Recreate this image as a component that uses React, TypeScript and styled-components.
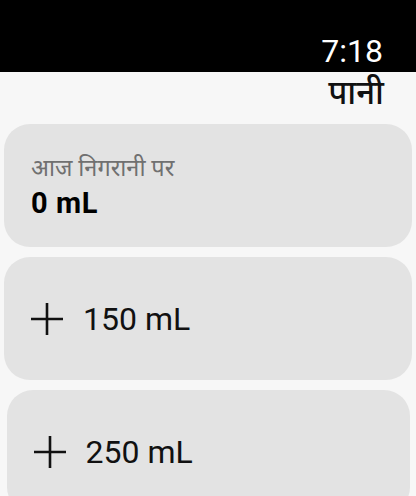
import React from 'react';
import styled, { createGlobalStyle } from 'styled-components';

const GlobalStyle = createGlobalStyle`
  html, body {
    margin: 0;
    padding: 0;
    background: #f7f7f7;
    font-family: Roboto, 'Noto Sans', sans-serif;
  }
`;

interface Amount {
  id: number;
  ml: number;
  inset: number;
}

const amounts: Amount[] = [
  { id: 1, ml: 150, inset: 0 },
  { id: 2, ml: 250, inset: 2.5 },
];

const PlusIcon: React.FC = () => (
  <svg width="32" height="32" viewBox="0 0 32 32">
    <path d="M0 16 H32 M16 0 V32" stroke="#111" strokeWidth="2.6" strokeLinecap="round" />
  </svg>
);

const App: React.FC = () => {
  return (
    <Screen>
      <GlobalStyle />
      <StatusBar>
        <Time>7:18</Time>
      </StatusBar>
      <Header>
        <Title>पानी</Title>
      </Header>
      <List>
        <SummaryCard>
          <Label>आज निगरानी पर</Label>
          <Total>0 mL</Total>
        </SummaryCard>
        {amounts.map(a => (
          <AddCard key={a.id} inset={a.inset}>
            <PlusIcon />
            <AddLabel>{a.ml} mL</AddLabel>
          </AddCard>
        ))}
      </List>
    </Screen>
  );
};

export default App;

const Screen = styled.div`
  width: 416px;
  height: 496px;
  overflow: hidden;
  background: #f7f7f7;
`;

const StatusBar = styled.div`
  height: 72px;
  background: #000;
  display: flex;
  justify-content: flex-end;
  align-items: flex-end;
  padding: 0 33px 3px 0;
  box-sizing: border-box;
`;

const Time = styled.span`
  color: #fff;
  font-family: Roboto, sans-serif;
  font-size: 32px;
  line-height: 36px;
`;

const Header = styled.div`
  display: flex;
  justify-content: flex-end;
  padding: 0 32px 0 0;
  height: 52px;
`;

const Title = styled.span`
  color: #111;
  font-size: 33px;
  font-weight: 500;
  line-height: 42px;
`;

const List = styled.div`
  display: flex;
  flex-direction: column;
  gap: 10px;
  padding: 0 4px;
`;

const Card = styled.div<{ inset?: number }>`
  height: 123px;
  border-radius: 26px;
  background: #e3e3e3;
  box-sizing: border-box;
  padding-left: 27px;
  margin: 0 ${p => p.inset || 0}px;
`;

const SummaryCard = styled(Card)`
  display: flex;
  flex-direction: column;
  justify-content: center;
  gap: 4px;
`;

const Label = styled.span`
  color: #707070;
  font-size: 23.5px;
  line-height: 30px;
`;

const Total = styled.span`
  color: #000;
  font-size: 29px;
  font-weight: 700;
  letter-spacing: 0.6px;
  line-height: 32px;
`;

const AddCard = styled(Card)`
  display: flex;
  align-items: center;
  gap: 20px;
`;

const AddLabel = styled.span`
  color: #111;
  font-size: 32px;
  line-height: 36px;
`;
